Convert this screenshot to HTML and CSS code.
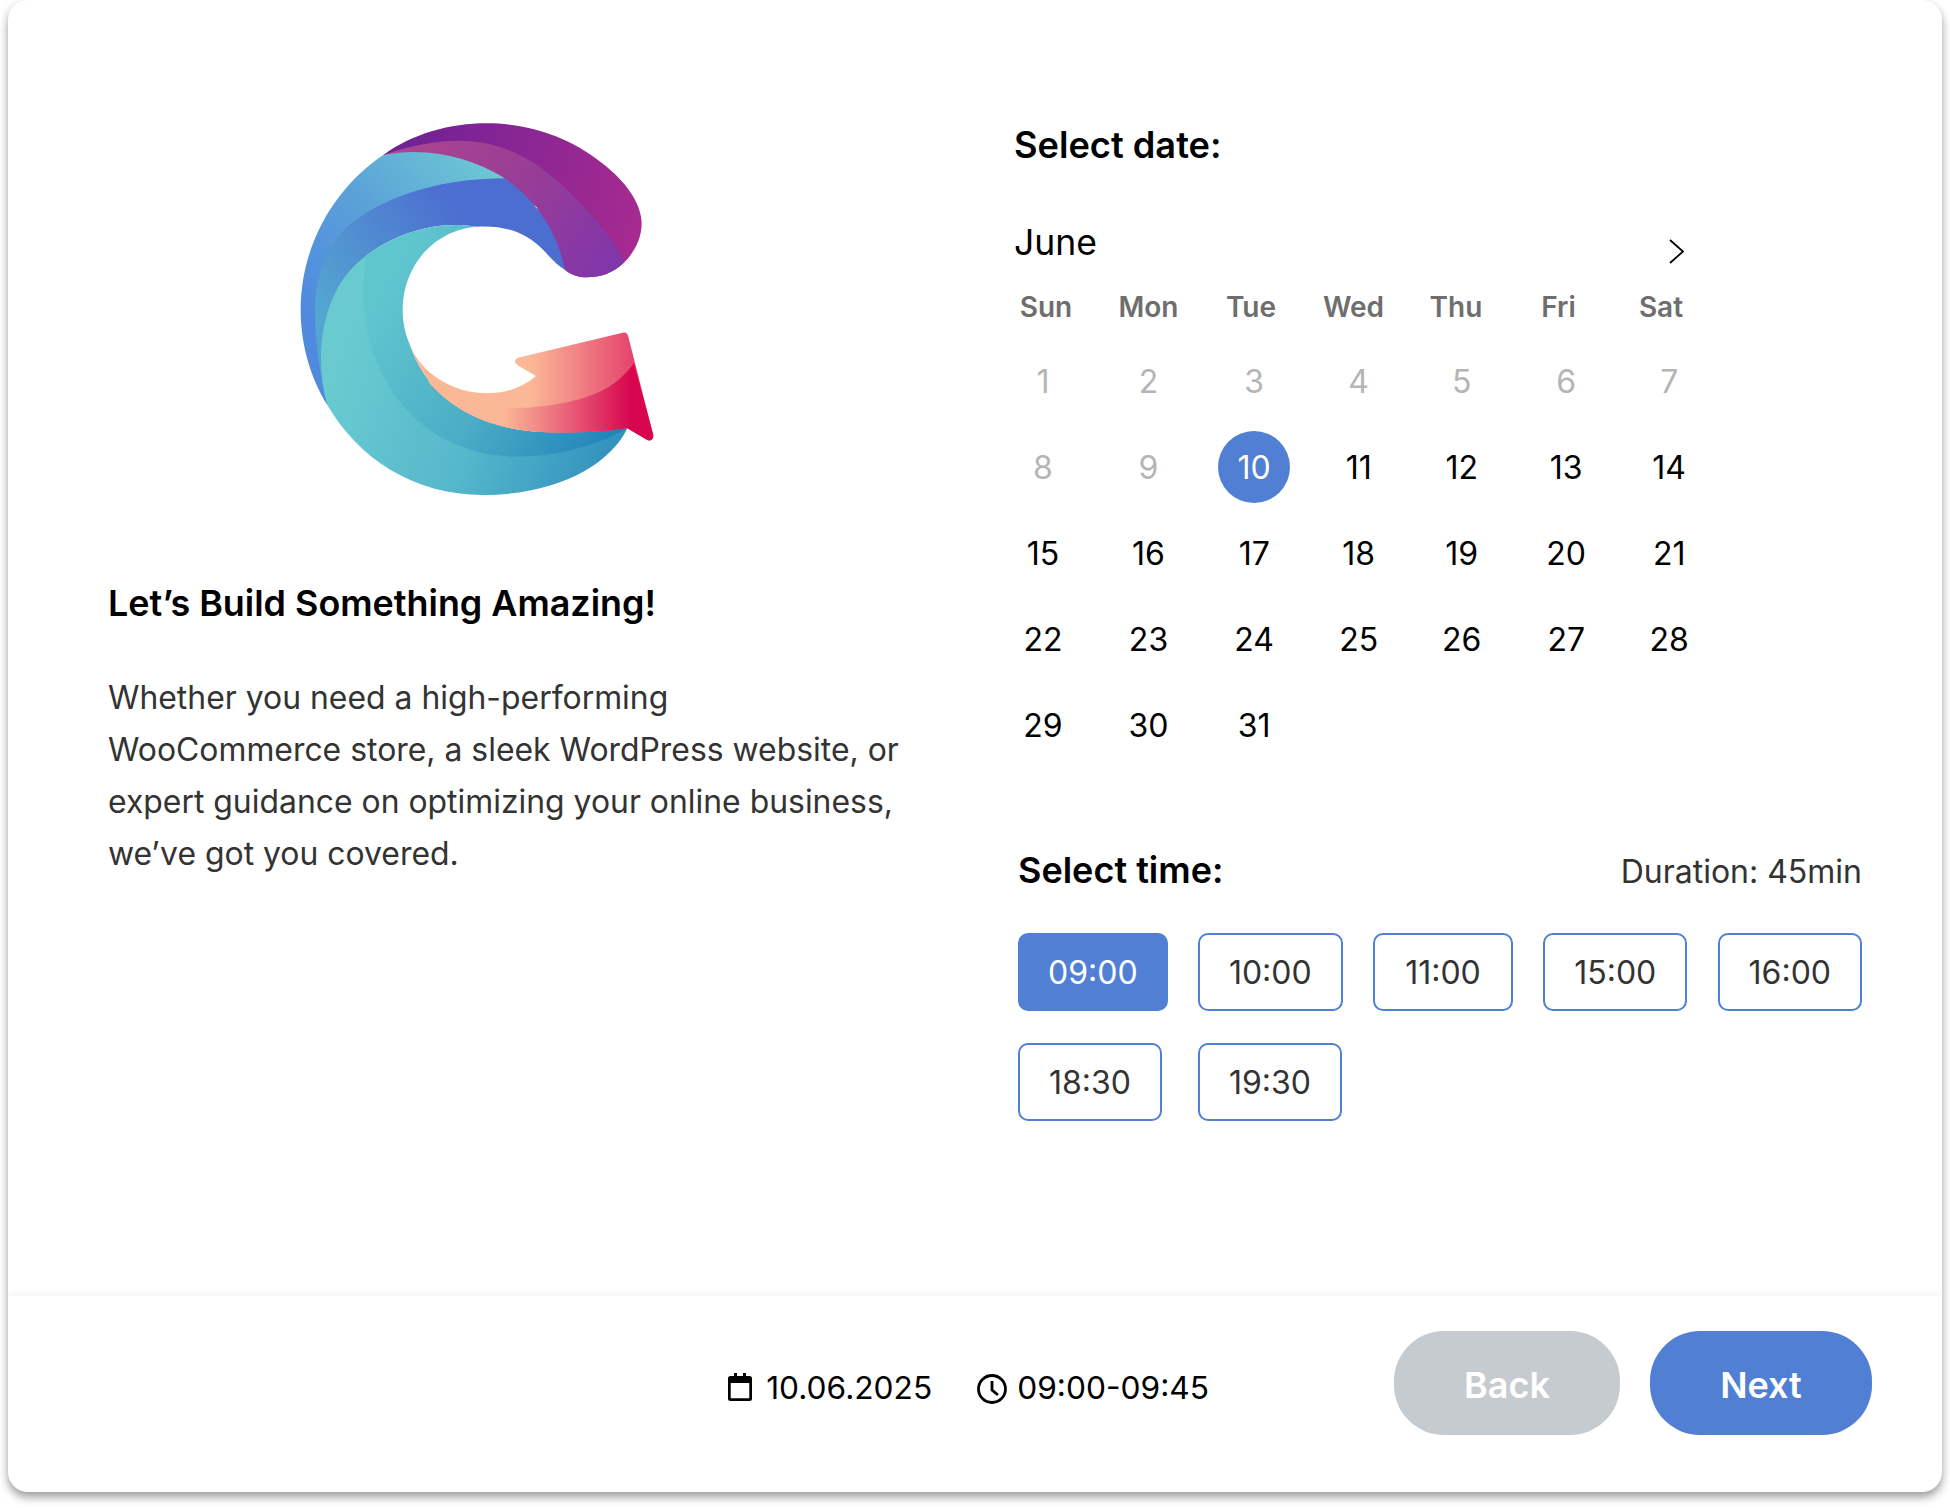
FILE: index.html
```html
<!DOCTYPE html>
<html lang="en">
<head>
<meta charset="utf-8">
<title>Book a call</title>
<link rel="stylesheet" href="styles.css">
</head>
<body>
<div class="card">
  <main class="main">
    <section class="intro">
      <svg class="logo" viewBox="0 0 1200 1230" aria-hidden="true">
        <defs>
          <linearGradient id="gPurple" gradientUnits="userSpaceOnUse" x1="340" y1="200" x2="1115" y2="330"><stop offset="0" stop-color="#6c2196"/><stop offset="1" stop-color="#a62a90"/></linearGradient>
          <linearGradient id="gPurple2" gradientUnits="userSpaceOnUse" x1="400" y1="130" x2="1010" y2="520"><stop offset="0" stop-color="#ab4590"/><stop offset=".5" stop-color="#983d96"/><stop offset="1" stop-color="#8136aa"/></linearGradient>
          <linearGradient id="gSky" gradientUnits="userSpaceOnUse" x1="130" y1="650" x2="640" y2="190"><stop offset="0" stop-color="#4f8ade"/><stop offset=".5" stop-color="#5ba2d8"/><stop offset="1" stop-color="#6cc6d4"/></linearGradient>
          <linearGradient id="gRoyal" gradientUnits="userSpaceOnUse" x1="140" y1="620" x2="560" y2="320"><stop offset="0" stop-color="#54a6d0"/><stop offset="1" stop-color="#4c6ed1"/></linearGradient>
          <linearGradient id="gTeal" gradientUnits="userSpaceOnUse" x1="200" y1="800" x2="1060" y2="1100"><stop offset="0" stop-color="#69cbd0"/><stop offset=".5" stop-color="#55b7cb"/><stop offset="1" stop-color="#2f8ebd"/></linearGradient>
          <linearGradient id="gInner" gradientUnits="userSpaceOnUse" x1="300" y1="620" x2="1040" y2="1040"><stop offset="0" stop-color="#60c6ce"/><stop offset=".5" stop-color="#4cadc6"/><stop offset="1" stop-color="#1f82b8"/></linearGradient>
          <linearGradient id="gArrow" gradientUnits="userSpaceOnUse" x1="780" y1="800" x2="1095" y2="800"><stop offset="0" stop-color="#fbb897"/><stop offset="1" stop-color="#e5426c"/></linearGradient>
          <linearGradient id="gArrow2" gradientUnits="userSpaceOnUse" x1="700" y1="950" x2="1085" y2="950"><stop offset="0" stop-color="#fbb897"/><stop offset=".45" stop-color="#ea6a7c"/><stop offset="1" stop-color="#d8054f"/></linearGradient>
        </defs>
        <path fill="url(#gPurple)" d="M340 165C430 100 540 70 650 70C800 70 920 125 1010 200C1080 258 1115 320 1115 370C1115 420 1090 460 1063 487C1030 520 990 532 950 532C925 532 905 525 885 510L800 320L600 180Z"/>
        <path fill="url(#gPurple2)" d="M340 165C420 135 500 122 570 122C690 122 790 175 870 250C960 335 1020 400 1063 487C1030 520 990 532 950 532C925 532 905 525 885 510L800 320L600 200Z"/>
        <path fill="url(#gSky)" d="M340 165C210 250 92 420 92 630C92 740 125 840 172 915L240 420L705 235C600 170 470 140 340 165Z"/>
        <path fill="url(#gRoyal)" d="M705 235C540 235 370 275 250 365C170 425 135 530 135 630C135 720 150 830 172 915L288 468C370 405 490 360 620 380C720 375 775 405 820 450C845 478 865 498 885 510C860 390 800 305 705 235Z"/>
        <path fill="url(#gTeal)" d="M172 915C140 800 150 680 190 590C215 535 250 495 288 468L340 700C400 900 600 1040 800 1040L1072 985C1020 1095 860 1185 640 1185C430 1185 265 1075 172 915Z"/>
        <path fill="url(#gInner)" d="M288 468C370 405 490 360 620 380C490 390 398 500 398 630C398 665 405 700 418 730C470 890 610 980 800 995L1072 985C980 1040 850 1070 740 1070C590 1070 450 1000 370 880C295 770 262 630 288 468Z"/>
        <path fill="url(#gArrow)" d="M418 730C450 820 550 880 650 880C710 880 760 860 798 828L745 797C730 788 733 775 750 772L1058 698C1068 696 1072 700 1075 710L1149 1002C1153 1018 1140 1026 1128 1018L1072 985C980 998 890 1000 800 995C610 980 470 890 418 730Z"/>
        <path fill="url(#gArrow2)" d="M470 840C530 890 610 920 700 925C830 925 930 905 1000 870C1040 850 1070 820 1092 790L1149 1002C1153 1018 1140 1026 1128 1018L1072 985C980 998 890 1000 800 995C660 985 550 935 470 840Z"/>
      </svg>
      <h1 class="intro-title">Let’s Build Something Amazing!</h1>
      <p class="intro-text">Whether you need a high-performing WooCommerce store, a sleek WordPress website, or expert guidance on optimizing your online business, we’ve got you covered.</p>
    </section>
    <section class="booking">
      <h2 class="date-title">Select date:</h2>
      <div class="month-row">
        <span class="month">June</span>
        <svg class="chevron" viewBox="0 0 15 25" aria-hidden="true"><path d="M1 1l13 11.500L1 24"/></svg>
      </div>
      <div class="weekdays"><span>Sun</span><span>Mon</span><span>Tue</span><span>Wed</span><span>Thu</span><span>Fri</span><span>Sat</span></div>
      <div class="days">
        <span class="day muted">1</span><span class="day muted">2</span><span class="day muted">3</span><span class="day muted">4</span><span class="day muted">5</span><span class="day muted">6</span><span class="day muted">7</span>
        <span class="day muted">8</span><span class="day muted">9</span><span class="day selected">10</span><span class="day">11</span><span class="day">12</span><span class="day">13</span><span class="day">14</span>
        <span class="day">15</span><span class="day">16</span><span class="day">17</span><span class="day">18</span><span class="day">19</span><span class="day">20</span><span class="day">21</span>
        <span class="day">22</span><span class="day">23</span><span class="day">24</span><span class="day">25</span><span class="day">26</span><span class="day">27</span><span class="day">28</span>
        <span class="day">29</span><span class="day">30</span><span class="day">31</span>
      </div>
      <div class="time-head">
        <h2 class="time-title">Select time:</h2>
        <span class="duration">Duration: 45min</span>
      </div>
      <div class="slots">
        <button class="slot active">09:00</button>
        <button class="slot">10:00</button>
        <button class="slot">11:00</button>
        <button class="slot">15:00</button>
        <button class="slot">16:00</button>
        <button class="slot">18:30</button>
        <button class="slot">19:30</button>
      </div>
    </section>
  </main>
  <footer class="footer">
    <div class="summary">
      <span class="summary-item item-date">
        <svg class="icon-cal" viewBox="0 0 24 28" aria-hidden="true"><path d="M6 0h3v3h6V0h3v3h3.500A2.500 2.500 0 0 1 24 5.500v20a2.500 2.500 0 0 1-2.500 2.500h-19A2.500 2.500 0 0 1 0 25.500v-20A2.500 2.500 0 0 1 2.500 3H6zM2.700 10v15.300h18.600V10z"/></svg>
        10.06.2025
      </span>
      <span class="summary-item item-time">
        <svg class="icon-clock" viewBox="0 0 30 30" aria-hidden="true"><circle cx="15" cy="15" r="13.500" /><path d="M15 7v9l6 5"/></svg>
        09:00-09:45
      </span>
    </div>
    <button class="btn btn-back">Back</button>
    <button class="btn btn-next">Next</button>
  </footer>
</div>
</body>
</html>
```
FILE: styles.css
```css
* { box-sizing: border-box; }
html, body { margin: 0; padding: 0; background: #fff; }
body { min-height: 1508px; padding: 0 8px; font-family: Inter, "Liberation Sans", sans-serif; color: #000; }

.card {
  width: 1934px;
  height: 1492px;
  background: #fff;
  border-radius: 20px;
  box-shadow: 0 5px 10px rgba(0, 0, 0, .4);
  display: flex;
  flex-direction: column;
  overflow: hidden;
}

.main { flex: 1; display: flex; }

.intro { width: 999px; padding: 100px 0 0 100px; }
.logo { display: block; width: 400px; height: 410px; margin-left: 162px; }
.intro-title { margin: 71px 0 0; font-size: 35.9px; line-height: 44px; font-weight: 600; }
.intro-text { margin: 47px 0 0; width: 800px; font-size: 31.9px; line-height: 52px; color: #333; }

.booking { width: 855px; padding-top: 123px; }
.date-title { margin: 0 0 0 7px; font-size: 36.2px; line-height: 44px; font-weight: 600; }

.month-row { display: flex; justify-content: space-between; margin: 54px 0 24px 7px; padding-right: 178px; }
.month { font-size: 35.5px; line-height: 44px; }
.chevron { width: 15px; height: 25px; margin-top: 18px; fill: none; stroke: #000; stroke-width: 1.8; }

.weekdays {
  display: grid;
  grid-template-columns: repeat(7, 72px);
  column-gap: 30.5px;
  margin: 0 0 20px 3px;
  font-size: 28px;
  line-height: 36px;
  font-weight: 600;
  color: #6e6e6e;
  text-align: center;
}

.days {
  display: grid;
  grid-template-columns: 105.5px 105.7px 104.5px 103px 104.5px 103px 72px;
  grid-auto-rows: 72px;
  justify-items: start;
  row-gap: 14px;
  font-size: 32px;
}
.day { width: 72px; display: flex; align-items: center; justify-content: center; border-radius: 50%; }
.day.muted { color: #b5b5b5; }
.day.selected { background: #507fd3; color: #fff; }

.time-head { display: flex; justify-content: space-between; align-items: center; margin: 88px 0 0 11px; height: 44px; }
.time-title { margin: 0 0 2px; font-size: 36px; line-height: 44px; font-weight: 600; }
.duration { font-size: 32px; color: #333; }

.slots {
  display: grid;
  grid-template-columns: repeat(5, auto);
  justify-content: space-between;
  justify-items: start;
  row-gap: 32px;
  margin: 40px 0 0 11px;
}
.slot {
  height: 78px;
  min-width: 140px;
  padding: 0 29px;
  background: #fff;
  border: 2px solid #507fd3;
  border-radius: 10px;
  font: 400 32px Inter, "Liberation Sans", sans-serif;
  color: #333;
}
.slot.active { padding: 0 28px; background: #507fd3; color: #fff; }

.footer {
  height: 196px;
  flex: none;
  box-shadow: 0 -3px 6px rgba(0, 0, 0, .04);
  display: flex;
  align-items: center;
  padding: 0 70px 22px 0;
  justify-content: flex-end;
  gap: 30px;
}
.summary { display: flex; gap: 45px; margin: 8px 155px 0 0; font-size: 31.7px; }
.summary-item { display: flex; align-items: center; }
.item-date { gap: 14px; }
.item-time { gap: 10px; }
.icon-cal { width: 24px; height: 28px; fill: #000; }
.icon-clock { width: 30px; height: 30px; fill: none; stroke: #000; stroke-width: 2.8; margin-top: 3px; }

.btn {
  height: 104px;
  border: 0;
  border-radius: 50px;
  padding: 3px 0 0;
  font: 600 36px Inter, "Liberation Sans", sans-serif;
  color: #fff;
}
.btn-back { width: 226px; background: #c6cbcf; }
.btn-next { width: 222px; background: #507fd3; }
```
